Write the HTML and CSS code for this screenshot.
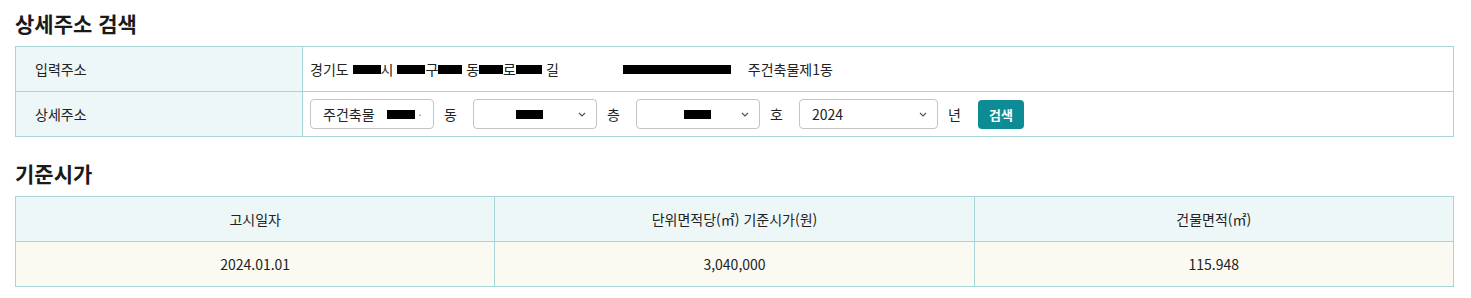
FILE: index.html
```html
<!DOCTYPE html>
<html lang="ko">
<head>
    <meta charset="UTF-8">
    <title>상세주소 검색</title>
    <link rel="stylesheet" href="styles.css">
</head>
<body>
    <div class="wrap">
        <h2 class="section-title">상세주소 검색</h2>
        <table class="addr-table">
            <tr>
                <th>입력주소</th>
                <td class="addr">경기도 <span class="mask m28"></span>시 <span class="mask m28"></span>구<span class="mask m24"></span> 동<span class="mask m24"></span>로<span class="mask m26"></span> 길<span class="mask big"></span><span class="bld">주건축물제1동</span></td>
            </tr>
            <tr>
                <th>상세주소</th>
                <td>
                    <div class="search-row">
                        <div class="sel sel-dong">
                            <span>주건축물</span><span class="mask m28 gap"></span><span class="dot">·</span>
                        </div>
                        <span class="unit">동</span>
                        <div class="sel sel-floor">
                            <span class="mask m27 v2"></span>
                            <svg class="chev" viewBox="0 0 8 5"><path d="M1 1l3 3 3-3" /></svg>
                        </div>
                        <span class="unit">층</span>
                        <div class="sel sel-floor">
                            <span class="mask m27 v3"></span>
                            <svg class="chev" viewBox="0 0 8 5"><path d="M1 1l3 3 3-3" /></svg>
                        </div>
                        <span class="unit">호</span>
                        <div class="sel sel-year">
                            <span>2024</span>
                            <svg class="chev" viewBox="0 0 8 5"><path d="M1 1l3 3 3-3" /></svg>
                        </div>
                        <span class="unit">년</span>
                        <button class="btn-search">검색</button>
                    </div>
                </td>
            </tr>
        </table>

        <h2 class="section-title second">기준시가</h2>
        <table class="price-table">
            <thead>
                <tr>
                    <th>고시일자</th>
                    <th>단위면적당(㎡) 기준시가(원)</th>
                    <th>건물면적(㎡)</th>
                </tr>
            </thead>
            <tbody>
                <tr>
                    <td>2024.01.01</td>
                    <td>3,040,000</td>
                    <td>115.948</td>
                </tr>
            </tbody>
        </table>
    </div>
</body>
</html>
```

FILE: styles.css
```css
body {
    margin: 0;
    font-family: "Noto Sans CJK KR", "Noto Sans", sans-serif;
    color: #222;
    background: #fff;
}

.wrap {
    margin: 0 17px 0 15px;
    padding-top: 8px;
}

.section-title {
    margin: 0 0 8px;
    font-size: 21px;
    line-height: 30px;
    font-weight: 700;
    color: #1a1a1a;
}

.section-title.second {
    margin-top: 21px;
}

table {
    width: 100%;
    border-collapse: collapse;
    table-layout: fixed;
    font-size: 14px;
}

th, td {
    border: 1px solid #a9d4d8;
    height: 44px;
    padding: 0;
}

/* address table */
.addr-table th {
    width: 267px;
    background: #eef7f7;
    text-align: left;
    font-weight: 400;
    padding-left: 19px;
}

.addr-table td {
    padding-left: 7px;
}

.addr {
    white-space: nowrap;
}

.mask {
    display: inline-block;
    height: 9px;
    background: #000;
    vertical-align: 1px;
}

.m24 { width: 24px; }
.m26 { width: 26px; }
.m27 { width: 27px; }
.m28 { width: 28px; }

.mask.big {
    width: 108px;
    margin: 0 17px 0 64px;
}

.search-row {
    display: flex;
    align-items: center;
}

.sel {
    box-sizing: border-box;
    height: 30px;
    border: 1px solid #c4c4c4;
    border-radius: 4px;
    display: flex;
    align-items: center;
    position: relative;
    background: #fff;
}

.sel-dong {
    width: 124px;
    padding-left: 12px;
}

.sel-dong .gap {
    margin-left: 12px;
}

.sel-dong .dot {
    margin-left: 4px;
    font-size: 10px;
    color: #666;
}

.sel-floor {
    width: 124px;
}

.v2 { margin-left: 42px; }
.v3 { margin-left: 47px; }

.sel-year {
    width: 139px;
    padding-left: 12px;
}

.chev {
    position: absolute;
    right: 10px;
    top: 12px;
    width: 8px;
    height: 5px;
    fill: none;
    stroke: #555;
    stroke-width: 1.2;
}

.unit {
    width: 14px;
    margin: 0 15px 0 10px;
}

.btn-search {
    height: 29px;
    width: 46px;
    margin-left: 1px;
    border: none;
    border-radius: 4px;
    background: #0e8c96;
    color: #fff;
    font-family: inherit;
    font-size: 13px;
    font-weight: 700;
    padding: 0;
}

/* price table */
.price-table th {
    background: #eef7f7;
    font-weight: 400;
}

.price-table td {
    background: #fafaf3;
    text-align: center;
}
```
